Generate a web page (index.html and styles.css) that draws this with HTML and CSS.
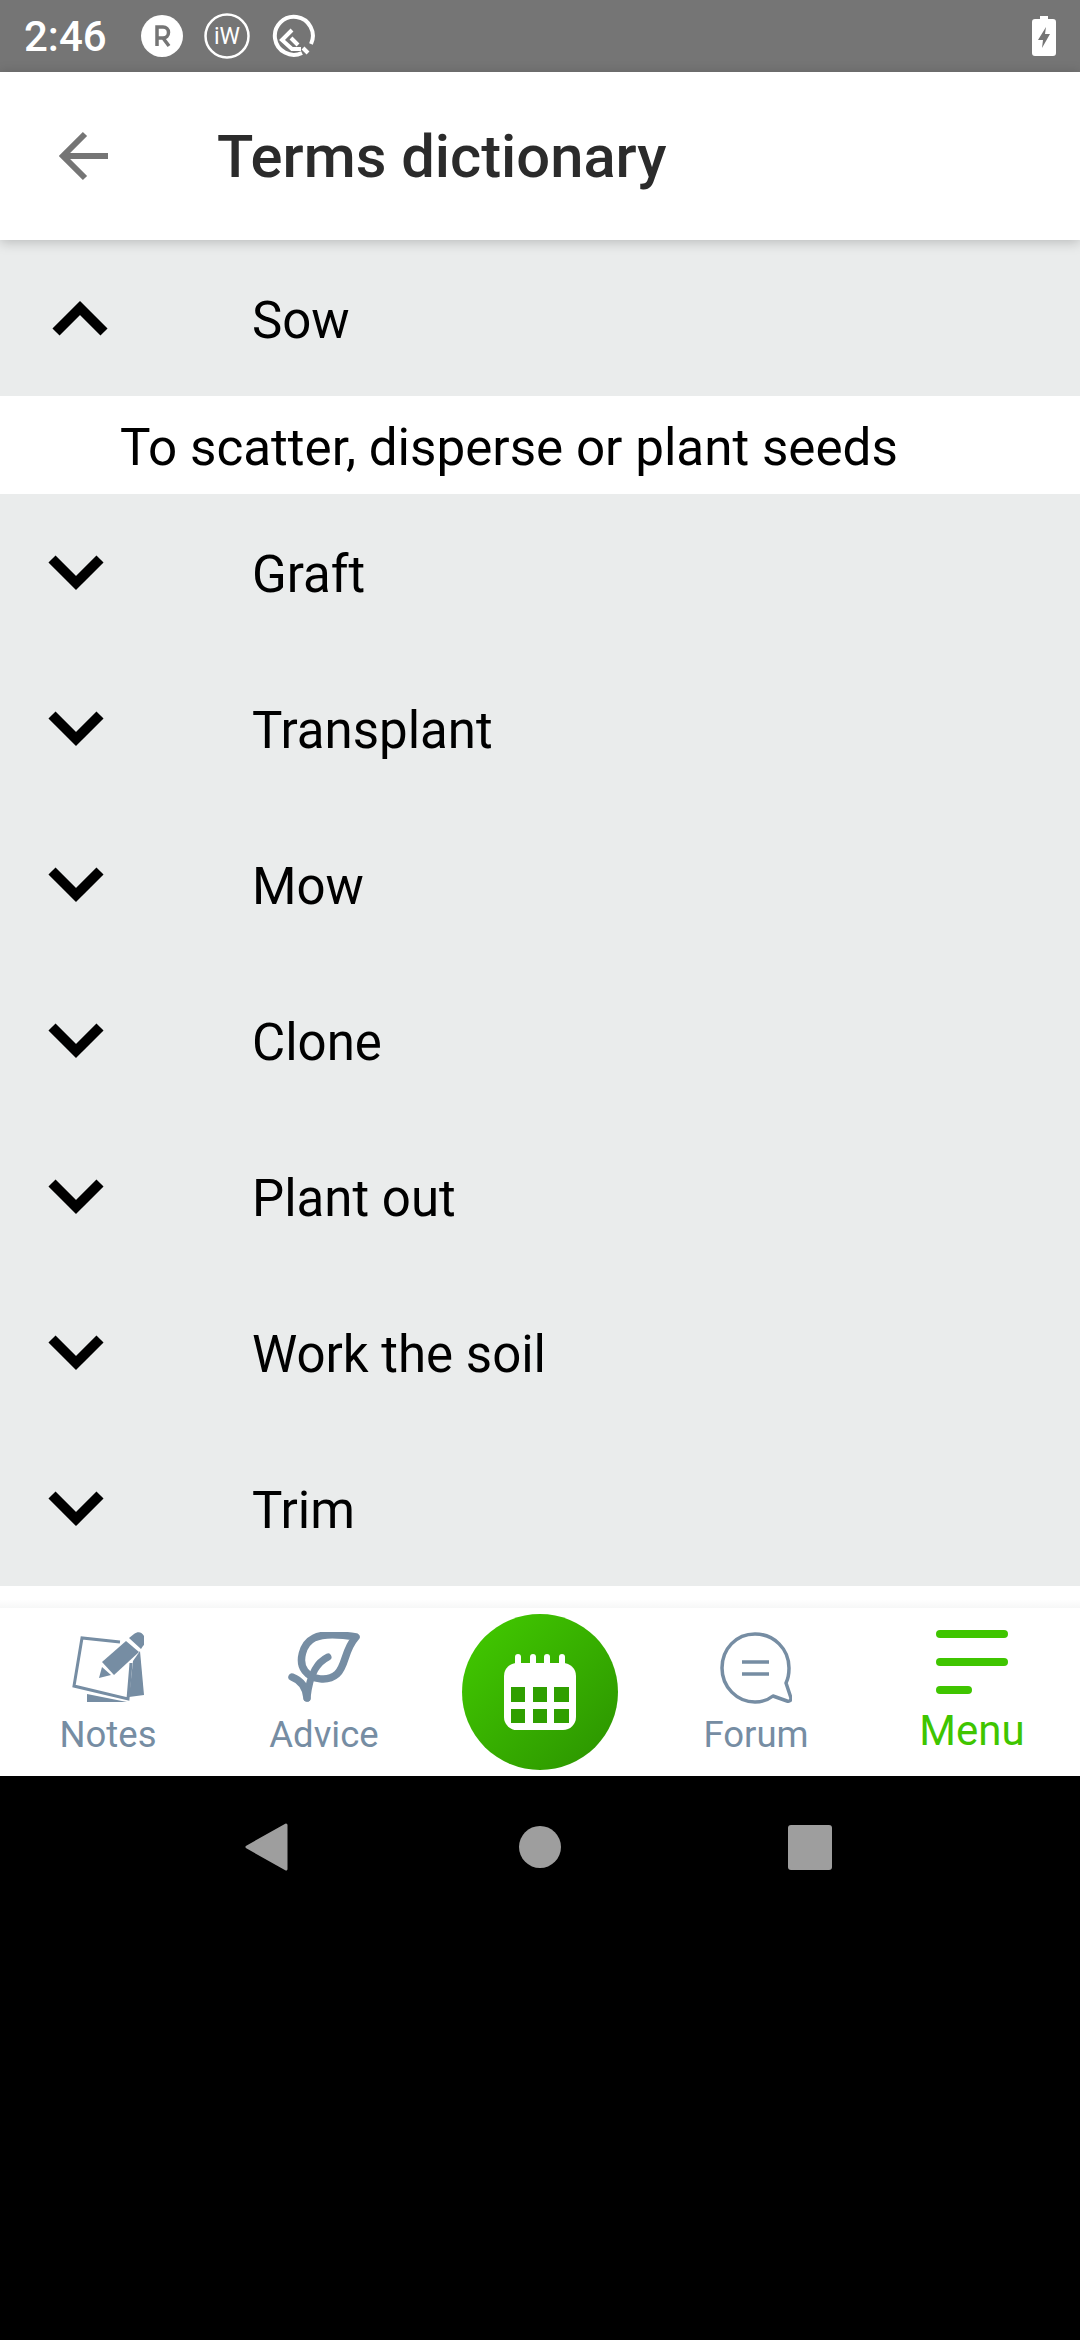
FILE: index.html
```html
<!DOCTYPE html>
<html>

<head>
    <meta charset="utf-8">
    <title>Terms dictionary</title>
    <meta name="viewport" content="width=device-width, initial-scale=1">
    <link rel="stylesheet" href="styles.css">
</head>

<body>
    <div class="statusbar">
        <span class="clock">2:46</span>
        <svg class="st-r" width="44" height="44" viewBox="0 0 44 44">
            <circle cx="22" cy="22" r="21" fill="#fff"/>
            <path d="M17 32V13h6a5.5 5.5 0 0 1 0 11h-6M23 24l6 8" fill="none" stroke="#757575" stroke-width="3.5"/>
        </svg>
        <svg class="st-w" width="46" height="46" viewBox="0 0 46 46">
            <circle cx="23" cy="23" r="21.5" fill="none" stroke="#fff" stroke-width="2.5"/>
            <text x="23" y="31" class="st-w-text">iW</text>
        </svg>
        <svg class="st-q" width="44" height="44" viewBox="0 0 44 44">
            <path d="M30 39A19 19 0 1 1 39 30" fill="none" stroke="#fff" stroke-width="4"/>
            <path d="M20 16L10 26l10 9h9" fill="none" stroke="#fff" stroke-width="4"/>
            <path d="M19 24l7 7" stroke="#fff" stroke-width="4"/>
            <path d="M31 34l5 5" stroke="#fff" stroke-width="4"/>
        </svg>
        <svg class="st-batt" width="24" height="40" viewBox="0 0 24 40">
            <path d="M8 0h8v3h5a3 3 0 0 1 3 3v31a3 3 0 0 1-3 3H3a3 3 0 0 1-3-3V6a3 3 0 0 1 3-3h5z" fill="#fff"/>
            <path d="M14 11L6 24h5l-1 8 8-14h-5z" fill="#757575"/>
        </svg>
    </div>

    <header class="topbar">
        <svg class="back" width="50" height="50" viewBox="0 0 50 50">
            <path d="M49 25H5M26 3L4 25l22 22" fill="none" stroke="#757575" stroke-width="6"/>
        </svg>
        <h1>Terms dictionary</h1>
    </header>

    <main class="terms">
        <div class="term">
            <svg class="chev chev-up" width="56" height="36" viewBox="0 0 56 36"><path d="M4 32L28 8l24 24" fill="none" stroke="#000" stroke-width="10"/></svg>
            <span>Sow</span>
        </div>
        <p class="definition">To scatter, disperse or plant seeds</p>
        <div class="term">
            <svg class="chev" width="56" height="36" viewBox="0 0 56 36"><path d="M4 4l24 24L52 4" fill="none" stroke="#000" stroke-width="10"/></svg>
            <span>Graft</span>
        </div>
        <div class="term">
            <svg class="chev" width="56" height="36" viewBox="0 0 56 36"><path d="M4 4l24 24L52 4" fill="none" stroke="#000" stroke-width="10"/></svg>
            <span>Transplant</span>
        </div>
        <div class="term">
            <svg class="chev" width="56" height="36" viewBox="0 0 56 36"><path d="M4 4l24 24L52 4" fill="none" stroke="#000" stroke-width="10"/></svg>
            <span>Mow</span>
        </div>
        <div class="term">
            <svg class="chev" width="56" height="36" viewBox="0 0 56 36"><path d="M4 4l24 24L52 4" fill="none" stroke="#000" stroke-width="10"/></svg>
            <span>Clone</span>
        </div>
        <div class="term">
            <svg class="chev" width="56" height="36" viewBox="0 0 56 36"><path d="M4 4l24 24L52 4" fill="none" stroke="#000" stroke-width="10"/></svg>
            <span>Plant out</span>
        </div>
        <div class="term">
            <svg class="chev" width="56" height="36" viewBox="0 0 56 36"><path d="M4 4l24 24L52 4" fill="none" stroke="#000" stroke-width="10"/></svg>
            <span>Work the soil</span>
        </div>
        <div class="term">
            <svg class="chev" width="56" height="36" viewBox="0 0 56 36"><path d="M4 4l24 24L52 4" fill="none" stroke="#000" stroke-width="10"/></svg>
            <span>Trim</span>
        </div>
    </main>

    <div class="gap"></div>

    <nav class="tabs">
        <div class="tab">
            <svg width="72" height="72" viewBox="0 0 72 72">
                <path d="M48 10L10 6 2 54l54 13 3-36" fill="none" stroke="#768da3" stroke-width="3"/>
                <path d="M15 62l40 8H15z" fill="#768da3"/>
                <path d="M68 19l4 44-15 2 4-36z" fill="#768da3"/>
                <path d="M30 30L54 9l13 11-25 23z" fill="#768da3"/>
                <path d="M27 46l3-11 9 8z" fill="#768da3"/>
                <path d="M57 6l5-4c4-3 8-2 10 2s1 8-1 10l-2 3z" fill="#768da3"/>
            </svg>
            <span>Notes</span>
        </div>
        <div class="tab">
            <svg width="72" height="72" viewBox="0 0 72 72">
                <path d="M68 5C50 2 34 2 26 6 14 12 10 30 17 39c7 9 23 11 32 3C58 34 56 18 68 5z" fill="none" stroke="#768da3" stroke-width="7.5" stroke-linejoin="round"/>
                <path d="M40 25C30 30 22 40 19 66" fill="none" stroke="#768da3" stroke-width="7" stroke-linecap="round"/>
                <path d="M4 45c8 3 14 9 15 21" fill="none" stroke="#768da3" stroke-width="7.5" stroke-linecap="round"/>
            </svg>
            <span>Advice</span>
        </div>
        <div class="tab">
            <div class="fab">
                <svg width="72" height="76" viewBox="0 0 72 76">
                    <g fill="#fff">
                        <rect x="11" y="0" width="6" height="16" rx="3"/>
                        <rect x="26" y="0" width="6" height="16" rx="3"/>
                        <rect x="40" y="0" width="6" height="16" rx="3"/>
                        <rect x="55" y="0" width="6" height="16" rx="3"/>
                        <rect x="0" y="9" width="72" height="67" rx="13"/>
                    </g>
                    <g fill="#2f9f00">
                        <rect x="7" y="33" width="14" height="15"/>
                        <rect x="29" y="33" width="14" height="15"/>
                        <rect x="50" y="33" width="15" height="15"/>
                        <rect x="7" y="55" width="14" height="14"/>
                        <rect x="29" y="55" width="14" height="14"/>
                        <rect x="50" y="55" width="15" height="14"/>
                    </g>
                </svg>
            </div>
        </div>
        <div class="tab">
            <svg width="72" height="72" viewBox="0 0 72 72">
                <path d="M35 2C16 2 2 17 2 36c0 19 15 34 33 34 7 0 13-2 18-6l14 5c3 1 4-1 4-3l-5-15c2-4 3-10 3-15C69 17 54 2 35 2z" fill="none" stroke="#768da3" stroke-width="3.5" stroke-linejoin="round"/>
                <path d="M22 30h27M22 42h27" stroke="#768da3" stroke-width="3.5"/>
            </svg>
            <span>Forum</span>
        </div>
        <div class="tab tab-active">
            <div class="burger">
                <i></i>
                <i></i>
                <i class="short"></i>
            </div>
            <span>Menu</span>
        </div>
    </nav>

    <div class="navbar">
        <svg width="44" height="48" viewBox="0 0 44 48"><path d="M41 2L2 24l39 22z" fill="#9e9e9e" stroke="#9e9e9e" stroke-width="3" stroke-linejoin="round"/></svg>
        <span class="nav-home"></span>
        <span class="nav-recent"></span>
    </div>
</body>

</html>
```

FILE: styles.css
```css
* {
    box-sizing: border-box;
}

html,
body {
    margin: 0;
    background-color: #000;
}

body {
    font-family: Roboto, "Noto Sans", sans-serif;
    height: 2340px;
    overflow: hidden;
}

.statusbar {
    display: flex;
    align-items: center;
    height: 72px;
    padding-left: 24px;
    background-color: #757575;
    color: #fff;
}

.clock {
    width: 116px;
    font-size: 42px;
    font-weight: 500;
}

.st-w {
    margin-left: 20px;
}

.st-w-text {
    font-size: 23px;
    fill: #fff;
    text-anchor: middle;
}

.st-q {
    margin-left: 22px;
}

.st-batt {
    margin-left: auto;
    margin-right: 24px;
}

.topbar {
    position: relative;
    display: flex;
    align-items: center;
    height: 168px;
    padding-left: 59px;
    background-color: #fff;
    box-shadow: 0 2px 12px rgba(0, 0, 0, 0.22);
}

.topbar h1 {
    margin: 2px 0 0 108px;
    font-size: 59.7px;
    font-weight: 500;
    color: #2b2b2b;
}

.terms {
    background-color: #eaecec;
}

.term {
    display: flex;
    align-items: center;
    height: 156px;
    padding-left: 48px;
    font-size: 51px;
    color: #000;
}

.term span {
    margin: 4px 0 0 148px;
}

.chev {
    margin-top: 2px;
}

.chev-up {
    margin-top: 0;
    margin-left: 4px;
    margin-right: -4px;
}

.definition {
    display: flex;
    align-items: center;
    height: 98px;
    margin: 0;
    padding: 4px 0 0 120px;
    background-color: #fff;
    font-size: 51.2px;
    color: #000;
}

.gap {
    height: 22px;
    background: linear-gradient(#fff 60%, #f6f7f7);
}

.tabs {
    display: grid;
    grid-template-columns: repeat(5, 216px);
    height: 168px;
    background-color: #fff;
}

.tab {
    display: flex;
    flex-direction: column;
    align-items: center;
    padding-top: 24px;
    font-size: 36.5px;
    color: #768da3;
}

.tab span {
    margin-top: 9px;
}

.fab {
    display: flex;
    align-items: center;
    justify-content: center;
    width: 156px;
    height: 156px;
    margin-top: -18px;
    border-radius: 50%;
    background: linear-gradient(135deg, #43cc00, #2b9200);
}

.tab-active {
    color: #3fc500;
    font-size: 42px;
}

.tab-active span {
    margin-top: 12px;
}

.burger {
    display: flex;
    flex-direction: column;
    gap: 20px;
    width: 72px;
    margin-top: -2px;
}

.burger i {
    display: block;
    height: 8px;
    border-radius: 4px;
    background-color: #3fc500;
}

.burger .short {
    width: 36px;
}

.navbar {
    display: flex;
    align-items: center;
    height: 142px;
    padding-left: 245px;
}

.nav-home {
    width: 42px;
    height: 42px;
    margin-left: 230px;
    border-radius: 50%;
    background-color: #9e9e9e;
}

.nav-recent {
    width: 44px;
    height: 45px;
    margin-left: 227px;
    border-radius: 3px;
    background-color: #9e9e9e;
}
```
